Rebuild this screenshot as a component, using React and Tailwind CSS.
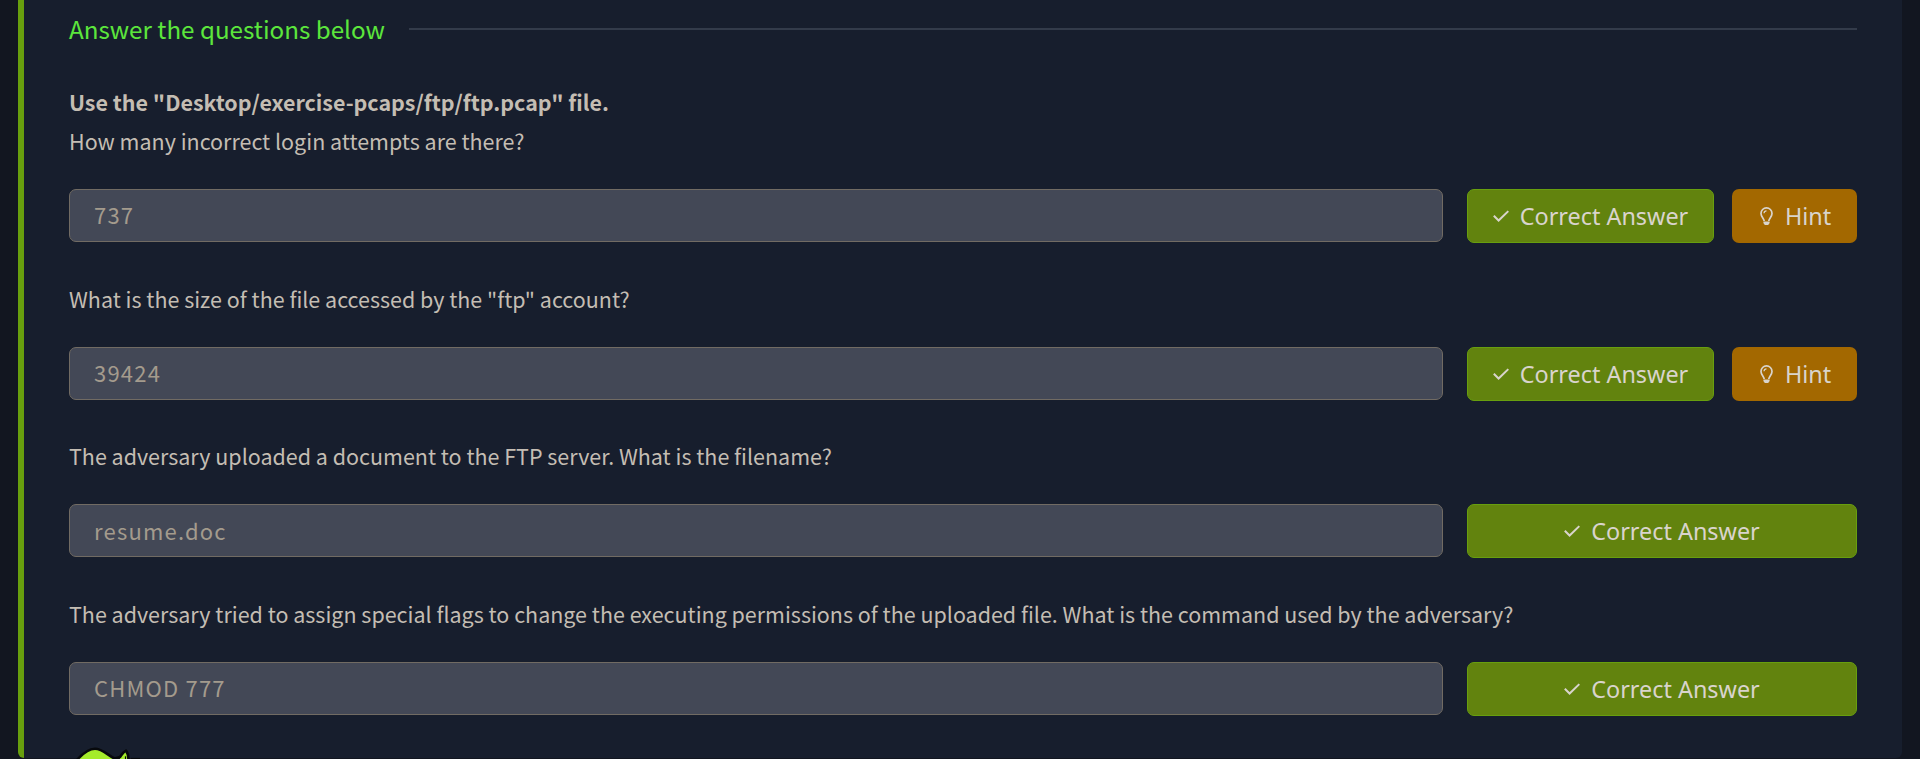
import React from "react";

const questions = [
  { title: 'Use the "Desktop/exercise-pcaps/ftp/ftp.pcap" file.', text: "How many incorrect login attempts are there?", answer: "737", hint: true },
  { text: 'What is the size of the file accessed by the "ftp" account?', answer: "39424", hint: true },
  { text: "The adversary uploaded a document to the FTP server. What is the filename?", answer: "resume.doc", hint: false },
  { text: "The adversary tried to assign special flags to change the executing permissions of the uploaded file. What is the command used by the adversary?", answer: "CHMOD 777", hint: false },
];

function Check() {
  return (
    <svg className="w-4 h-4 shrink-0" viewBox="0 0 16 16" fill="none" stroke="currentColor" strokeWidth="2">
      <path d="M0.8 7.8 L5.6 12.5 L15.3 3.1" />
    </svg>
  );
}

function Bulb() {
  return (
    <svg className="w-[13px] h-[18px] shrink-0" viewBox="0 0 13 18" fill="none" stroke="currentColor" strokeWidth="1.7">
      <path d="M4.2 14C4 11.6 1 9.8 1 6.4a5.5 5.5 0 0 1 11 0C12 9.8 9 11.6 8.8 14" />
      <path d="M4 6.2A2.5 2.5 0 0 1 6.5 3.8" strokeWidth="1.2" />
      <path d="M3.4 14.6H9.6V16L8.2 18H4.8L3.4 16Z" fill="currentColor" stroke="none" />
    </svg>
  );
}

function Mascot() {
  return (
    <svg className="absolute left-[70px] top-[744px] w-[70px] h-[15px]" viewBox="0 0 70 15" fill="#a5ec2b" stroke="#07090c" strokeWidth="2.6" strokeLinejoin="round">
      <path d="M6 17C13 9 19 4.8 25 4.8C32 4.8 37 10.5 44.5 14.5L50 13C52 10 54 7.5 56 6.6C57.8 9 58.5 12 58.5 17Z" />
      <path d="M42 13.5L46 17H49L50.5 13Z" fill="#07090c" stroke="none" />
      <path d="M55.5 12.3V15" strokeWidth="1.2" />
      <path d="M61 14.6H70" strokeWidth="1.4" />
    </svg>
  );
}

function Question({ q }) {
  return (
    <section className="h-[157.67px] shrink-0 flex flex-col justify-end">
      {q.title && <p className="text-[21.45px] leading-[39px] font-bold whitespace-nowrap">{q.title}</p>}
      <p className="text-[21.48px] leading-[39px] whitespace-nowrap">{q.text}</p>
      <div className="mt-[29px] flex items-start justify-between h-[54px] shrink-0">
        <div className="w-[1374px] h-[53px] rounded-[7px] border border-[#716b63] bg-[#434856] px-6 pb-[1px] flex items-center text-[22px] text-[#a49b8d] tracking-[1.2px]">
          <span>{q.answer}</span>
        </div>
        <div className="w-[390px] h-[54px] flex gap-[18px] font-['Noto_Sans',sans-serif] text-[23.4px] text-[#d9d4cc]">
          <button className="flex-1 rounded-[7px] border border-[#689f0e] bg-[#62830e] flex items-center justify-center gap-[11px]">
            <Check />
            <span className="whitespace-nowrap pt-[1px]">Correct Answer</span>
          </button>
          {q.hint && (
            <button className="w-[125px] rounded-[7px] bg-[#a36800] flex items-center pl-[28px] gap-3">
              <Bulb />
              <span className="pt-[1px]">Hint</span>
            </button>
          )}
        </div>
      </div>
    </section>
  );
}

export default function App() {
  return (
    <div className="relative w-[1920px] h-[759px] overflow-hidden bg-[#121620] px-[18px] font-['Noto_Sans_CJK_SC',sans-serif] text-[#c4bdb3]">
      <main className="w-full h-[758px] bg-[#171e2d] border-l-[6px] border-[#689f0e] rounded-b-[6px] px-[45px] flex flex-col">
        <div className="flex items-center h-[58px] shrink-0 gap-6">
          <h2 className="text-[24.2px] leading-[57px] pb-[1px] text-[#5ce63c] whitespace-nowrap">Answer the questions below</h2>
          <div className="flex-1 h-[2px] bg-[#333b4a]" />
        </div>
        <div className="mt-[27.3px] flex flex-col">
          {questions.map((q) => <Question key={q.answer} q={q} />)}
        </div>
      </main>
      <Mascot />
    </div>
  );
}
